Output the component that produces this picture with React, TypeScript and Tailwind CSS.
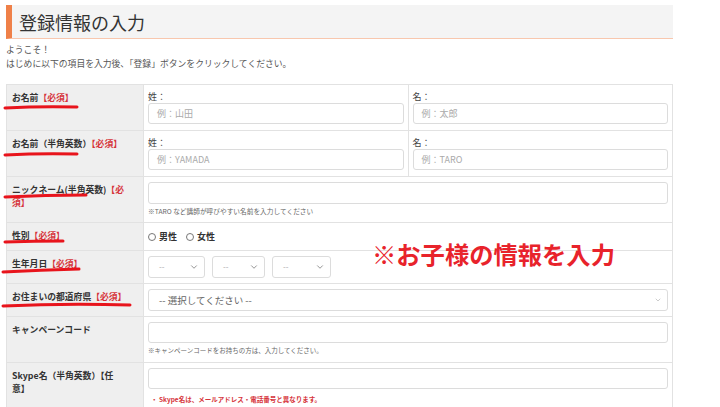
import { ChevronDown } from "lucide-react";

const Req = () => <span className="text-[#d6343b]">【必須】</span>;

const TextInput = ({ placeholder }: { placeholder?: string }) => (
  <div className="h-[21px] border border-[#dcdcdc] rounded-[3px] bg-white flex items-center pl-[8px] text-[9px] text-[#aaa]">
    {placeholder}
  </div>
);

const Select = ({ w, children, small }: { w: string; children: React.ReactNode; small?: boolean }) => (
  <div
    className={`${w} h-[22px] border border-[#dcdcdc] rounded-[3px] bg-white flex items-center justify-between pr-[5px]`}
  >
    {children}
    <ChevronDown
      size={small ? 8 : 10}
      strokeWidth={1.5}
      className={small ? "text-[#999]" : "text-[#555]"}
    />
  </div>
);

const Radio = ({ label }: { label: string }) => (
  <div className="flex items-center gap-[3px]">
    <span className="w-[8px] h-[8px] rounded-full border border-[#777] bg-white"></span>
    <span className="text-[9px] font-bold text-[#333]">{label}</span>
  </div>
);

const Label = ({ children }: { children: React.ReactNode }) => (
  <div className="w-[137px] shrink-0 bg-[#efefef] border-r border-[#e2e2e2] pl-[5px] pr-[4px] pt-[6px] text-[8.8px] leading-[13px] font-bold text-[#333]">
    {children}
  </div>
);

export default function App() {
  return (
    <div className="w-[720px] h-[407px] overflow-hidden bg-white font-['Noto_Sans_CJK_JP',sans-serif]">
      <div className="w-[667px] ml-[6px] pt-[5px]">
        {/* header */}
        <div className="h-[34px] bg-[#f4f4f4] border-l-[6px] border-l-[#ef8048] border-b border-b-[#f8c7ae] flex items-center pl-[7px]">
          <h1 className="text-[18px] leading-none text-[#333] font-normal">登録情報の入力</h1>
        </div>

        <div className="mt-[4px] text-[8.8px] leading-[14px] text-[#555]">
          <p>ようこそ！</p>
          <p>はじめに以下の項目を入力後、「登録」ボタンをクリックしてください。</p>
        </div>

        {/* form table */}
        <div className="relative mt-[13px] border-t border-x border-[#e2e2e2]">
          <div className="flex h-[46px] border-b border-[#e2e2e2]">
            <Label>
              お名前<Req />
            </Label>
            <div className="flex-1 flex">
              <div className="flex-1 border-r border-[#e2e2e2] px-[4px] pt-[5px]">
                <p className="text-[9px] leading-[13px] text-[#444]">姓：</p>
                <TextInput placeholder="例：山田" />
              </div>
              <div className="flex-1 px-[4px] pt-[5px]">
                <p className="text-[9px] leading-[13px] text-[#444]">名：</p>
                <TextInput placeholder="例：太郎" />
              </div>
            </div>
          </div>

          <div className="flex h-[46px] border-b border-[#e2e2e2]">
            <Label>
              お名前（半角英数）<Req />
            </Label>
            <div className="flex-1 flex">
              <div className="flex-1 border-r border-[#e2e2e2] px-[4px] pt-[5px]">
                <p className="text-[9px] leading-[13px] text-[#444]">姓：</p>
                <TextInput placeholder="例：YAMADA" />
              </div>
              <div className="flex-1 px-[4px] pt-[5px]">
                <p className="text-[9px] leading-[13px] text-[#444]">名：</p>
                <TextInput placeholder="例：TARO" />
              </div>
            </div>
          </div>

          <div className="flex h-[46px] border-b border-[#e2e2e2]">
            <Label>
              ニックネーム(半角英数)<span className="text-[#d6343b]">【必<br />須】</span>
            </Label>
            <div className="flex-1 px-[4px] pt-[5px]">
              <div className="h-[22px] border border-[#dcdcdc] rounded-[3px] bg-white"></div>
              <p className="mt-[1px] text-[6.7px] leading-[12px] text-[#666]">
                ※TARO など講師が呼びやすい名前を入力してください
              </p>
            </div>
          </div>

          <div className="flex h-[28px] border-b border-[#e2e2e2]">
            <Label>
              性別<Req />
            </Label>
            <div className="flex-1 px-[4px] flex items-center gap-[9px]">
              <Radio label="男性" />
              <Radio label="女性" />
            </div>
          </div>

          <div className="flex h-[33px] border-b border-[#e2e2e2]">
            <Label>
              生年月日<Req />
            </Label>
            <div className="flex-1 px-[4px] flex items-center gap-[7px]">
              {["w-[57px]", "w-[53px]", "w-[59px]"].map((w) => (
                <Select key={w} w={w}>
                  <span className="pl-[10px] text-[8px] text-[#aaa]">--</span>
                </Select>
              ))}
            </div>
          </div>

          <div className="flex h-[33px] border-b border-[#e2e2e2]">
            <Label>
              お住まいの都道府県<Req />
            </Label>
            <div className="flex-1 px-[4px] flex items-center">
              <Select w="w-full" small>
                <span className="pl-[10px] text-[9.5px] text-[#666]">-- 選択してください --</span>
              </Select>
            </div>
          </div>

          <div className="flex h-[46px] border-b border-[#e2e2e2]">
            <Label>キャンペーンコード</Label>
            <div className="flex-1 px-[4px] pt-[5px]">
              <TextInput />
              <p className="mt-[1px] text-[6.5px] leading-[12px] text-[#666]">
                ※キャンペーンコードをお持ちの方は、入力してください。
              </p>
            </div>
          </div>

          <div className="flex h-[50px] border-b border-[#e2e2e2]">
            <Label>
              Skype名（半角英数）【任
              <br />
              意】
            </Label>
            <div className="flex-1 px-[4px] pt-[5px]">
              <TextInput />
              <p className="mt-[5px] pl-[3px] text-[6.5px] leading-[10px] font-bold text-[#d6343b]">
                ・ Skype名は、メールアドレス・電話番号と異なります。
              </p>
            </div>
          </div>

          {/* hand-drawn annotations */}
          <svg
            className="absolute left-[-6px] top-0 pointer-events-none"
            width="140"
            height="230"
            viewBox="0 0 140 230"
            fill="none"
            stroke="#e8141c"
            strokeWidth="3"
            strokeLinecap="round"
          >
            <path d="M4 23 Q40 21 76 22" />
            <path d="M4 70 Q40 68 76 69" />
            <path d="M4 112 Q45 110 85 110" />
            <path d="M4 157 Q33 156 62 156" />
            <path d="M2 187 Q40 185 78 184" />
            <path d="M2 221 Q65 218 129 220" />
          </svg>
          <p className="absolute left-[365px] top-[157px] text-[24.3px] leading-[24px] font-bold text-[#e8232b] whitespace-nowrap">
            ※お子様の情報を入力
          </p>
        </div>
      </div>
    </div>
  );
}
